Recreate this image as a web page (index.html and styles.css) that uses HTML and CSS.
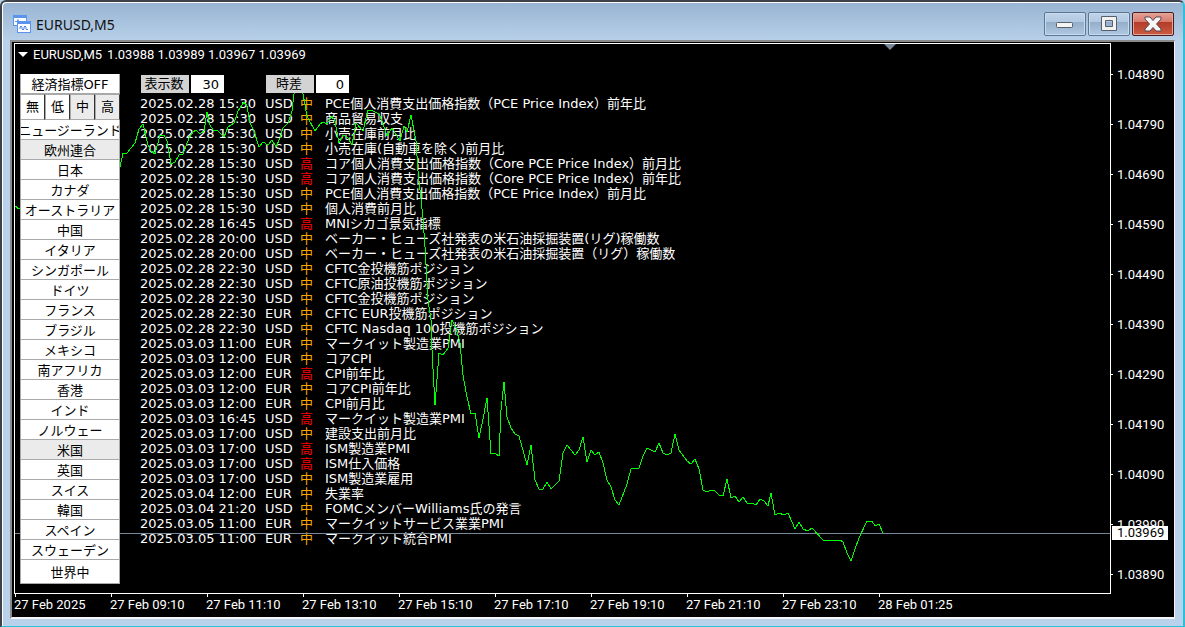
FILE: index.html
```
<!DOCTYPE html>
<html lang="ja">
<head>
    <meta charset="UTF-8">
    <meta name="viewport" content="width=device-width, initial-scale=1.0">
    <title>EURUSD,M5</title>
    <link rel="stylesheet" href="styles.css">
</head>
<body>
    <div class="window">
        <header class="titlebar">
            <svg class="app-icon" width="18" height="18" viewBox="0 0 18 18">
                <rect x="0" y="0" width="14" height="11" fill="#5b94ee"/>
                <rect x="1" y="3" width="12" height="7" fill="#fff"/>
                <path d="M2 6.500h2l1-2 1 3 2-1" fill="none" stroke="#5b94ee"/>
                <rect x="4" y="6" width="14" height="12" fill="#5b94ee"/>
                <rect x="5" y="9" width="12" height="8" fill="#fff"/>
                <path d="M7 14v-2l1-1 1 1v2l1 1 1-1v-2l1-1 1 1v2l1 1 1-1" fill="none" stroke="#4a80dd"/>
            </svg>
            <h1>EURUSD,M5</h1>
            <div class="window-buttons">
                <button class="win-btn" aria-label="最小化">
                    <svg width="18" height="16" viewBox="0 0 18 16">
                        <rect x="0.500" y="6.500" width="16" height="5" rx="1" fill="#f4f4f4" stroke="#56606c"/>
                    </svg>
                </button>
                <button class="win-btn" aria-label="最大化">
                    <svg width="18" height="16" viewBox="0 0 18 16">
                        <path d="M1.500 .5h15v14h-15zM5.500 4.500v6h7v-6z" fill="#f1f1f1" fill-rule="evenodd" stroke="#56606c"/>
                    </svg>
                </button>
                <button class="win-btn close" aria-label="閉じる">
                    <svg width="18" height="16" viewBox="0 0 18 16">
                        <path d="M1 1h5l3 3.500 3-3.500h5v2l-4.500 5 4.500 5v2h-5l-3-3.500-3 3.500h-5v-2l4.500-5-4.500-5z" fill="#f6f6f6" stroke="#5b4550"/>
                    </svg>
                </button>
            </div>
        </header>

        <main class="chart">
            <section class="plot">
                <svg class="price-line" viewBox="15 44 1095 549" preserveAspectRatio="none">
                    <path class="shift-mark" d="M884 44h12l-6 6z"/>
                    <path class="bid" d="M15 533.500H1110"/>
                    <polyline class="close-line" points="15,206 19,209 60,190 100,205 120,167 123,153 127,153 135,143 139,129 143,124 148,145 151,151 155,154 160,135 164,135 167,141 171,164 175,162 179,155 183,154 189,138 193,132 196,130 200,134 204,131 207,112 210,125 213,130 218,131 224,137 228,127 234,123 238,111 244,102 247,106 250,123 254,131 259,147 263,142 268,145 272,140 276,147 280,138 283,128 288,123 292,111 294,94 298,80 303,94 307,116 315,131 320,124 323,122 327,124 332,116 335,121 339,143 343,135 348,138 352,145 356,123 363,131 368,110 373,111 379,114 382,121 387,136 392,128 400,141 404,126 407,132 411,115 416,141 418,171 423,218 425,247 428,300 431,320 432,350 435,405 439,353 443,355 448,348 452,320 456,328 460,343 463,375 467,397 471,414 475,413 479,438 483,419 487,398 491,454 495,453 499,456 501,410 504,382 507,417 511,428 515,434 519,436 523,450 527,465 531,445 535,480 539,489 543,489 547,482 551,489 559,481 563,453 567,445 575,455 579,450 583,437 587,462 591,450 595,455 599,452 603,463 607,480 611,487 615,500 619,505 627,484 631,469 639,468 643,456 647,448 655,452 659,443 663,453 667,455 671,453 675,434 679,450 687,461 691,464 695,459 699,469 703,490 707,492 711,490 715,491 719,495 723,496 727,479 731,498 735,496 739,502 743,497 747,503 752,503 756,505 760,499 764,501 768,506 771,493 775,515 779,513 784,515 788,513 792,522 795,529 799,522 803,529 808,531 812,528 823,540 840,540 843,542 847,553 851,561 855,549 859,538 867,521 872,521 875,526 879,524 883,533"/>
                </svg>

                <div class="ohlc">
                    <span class="arrow"></span>
                    <span>EURUSD,M5</span>
                    <span>1.03988 1.03989 1.03967 1.03969</span>
                </div>

                <div class="content">
                    <div class="panel">
                        <button>経済指標OFF</button>
                        <div class="levels">
                            <button>無</button>
                            <button>低</button>
                            <button class="on">中</button>
                            <button class="on">高</button>
                        </div>
                        <button>ニュージーランド</button>
                        <button class="on">欧州連合</button>
                        <button>日本</button>
                        <button>カナダ</button>
                        <button>オーストラリア</button>
                        <button>中国</button>
                        <button>イタリア</button>
                        <button>シンガポール</button>
                        <button>ドイツ</button>
                        <button>フランス</button>
                        <button>ブラジル</button>
                        <button>メキシコ</button>
                        <button>南アフリカ</button>
                        <button>香港</button>
                        <button>インド</button>
                        <button>ノルウェー</button>
                        <button class="on">米国</button>
                        <button>英国</button>
                        <button>スイス</button>
                        <button>韓国</button>
                        <button>スペイン</button>
                        <button>スウェーデン</button>
                        <button class="world">世界中</button>
                    </div>

                    <div class="calendar">
                        <form class="fields">
                            <div class="field">
                                <label for="count">表示数</label>
                                <input id="count" type="text" value="30">
                            </div>
                            <div class="field">
                                <label for="offset">時差</label>
                                <input id="offset" type="text" value="0">
                            </div>
                        </form>
                        <table id="events">
                            <tbody></tbody>
                        </table>
                    </div>
                </div>
            </section>

            <aside class="price-axis">
                <span>1.04890</span>
                <span>1.04790</span>
                <span>1.04690</span>
                <span>1.04590</span>
                <span>1.04490</span>
                <span>1.04390</span>
                <span>1.04290</span>
                <span>1.04190</span>
                <span>1.04090</span>
                <span>1.03990</span>
                <span>1.03890</span>
                <strong class="bid-label">1.03969</strong>
            </aside>

            <footer class="time-axis">
                <span>27 Feb 2025</span>
                <span>27 Feb 09:10</span>
                <span>27 Feb 11:10</span>
                <span>27 Feb 13:10</span>
                <span>27 Feb 15:10</span>
                <span>27 Feb 17:10</span>
                <span>27 Feb 19:10</span>
                <span>27 Feb 21:10</span>
                <span>27 Feb 23:10</span>
                <span>28 Feb 01:25</span>
            </footer>
        </main>
    </div>

    <script>
        const events = [
            ['2025.02.28 15:30', 'USD', '中', 'PCE個人消費支出価格指数（PCE Price Index）前年比'],
            ['2025.02.28 15:30', 'USD', '中', '商品貿易収支'],
            ['2025.02.28 15:30', 'USD', '中', '小売在庫前月比'],
            ['2025.02.28 15:30', 'USD', '中', '小売在庫(自動車を除く)前月比'],
            ['2025.02.28 15:30', 'USD', '高', 'コア個人消費支出価格指数（Core PCE Price Index）前月比'],
            ['2025.02.28 15:30', 'USD', '高', 'コア個人消費支出価格指数（Core PCE Price Index）前年比'],
            ['2025.02.28 15:30', 'USD', '中', 'PCE個人消費支出価格指数（PCE Price Index）前月比'],
            ['2025.02.28 15:30', 'USD', '中', '個人消費前月比'],
            ['2025.02.28 16:45', 'USD', '高', 'MNIシカゴ景気指標'],
            ['2025.02.28 20:00', 'USD', '中', 'ベーカー・ヒューズ社発表の米石油採掘装置(リグ)稼働数'],
            ['2025.02.28 20:00', 'USD', '中', 'ベーカー・ヒューズ社発表の米石油採掘装置（リグ）稼働数'],
            ['2025.02.28 22:30', 'USD', '中', 'CFTC金投機筋ポジション'],
            ['2025.02.28 22:30', 'USD', '中', 'CFTC原油投機筋ポジション'],
            ['2025.02.28 22:30', 'USD', '中', 'CFTC金投機筋ポジション'],
            ['2025.02.28 22:30', 'EUR', '中', 'CFTC EUR投機筋ポジション'],
            ['2025.02.28 22:30', 'USD', '中', 'CFTC Nasdaq 100投機筋ポジション'],
            ['2025.03.03 11:00', 'EUR', '中', 'マークイット製造業PMI'],
            ['2025.03.03 12:00', 'EUR', '中', 'コアCPI'],
            ['2025.03.03 12:00', 'EUR', '高', 'CPI前年比'],
            ['2025.03.03 12:00', 'EUR', '中', 'コアCPI前年比'],
            ['2025.03.03 12:00', 'EUR', '中', 'CPI前月比'],
            ['2025.03.03 16:45', 'USD', '高', 'マークイット製造業PMI'],
            ['2025.03.03 17:00', 'USD', '中', '建設支出前月比'],
            ['2025.03.03 17:00', 'USD', '高', 'ISM製造業PMI'],
            ['2025.03.03 17:00', 'USD', '高', 'ISM仕入価格'],
            ['2025.03.03 17:00', 'USD', '中', 'ISM製造業雇用'],
            ['2025.03.04 12:00', 'EUR', '中', '失業率'],
            ['2025.03.04 21:20', 'USD', '中', 'FOMCメンバーWilliams氏の発言'],
            ['2025.03.05 11:00', 'EUR', '中', 'マークイットサービス業業PMI'],
            ['2025.03.05 11:00', 'EUR', '中', 'マークイット統合PMI']
        ];

        const tbody = document.querySelector('#events tbody');
        events.forEach(row => {
            const tr = document.createElement('tr');
            row.forEach(cell => {
                const td = document.createElement('td');
                td.textContent = cell;
                tr.appendChild(td);
            });
            tr.cells[2].className = row[2] === '高' ? 'high' : 'medium';
            tbody.appendChild(tr);
        });
    </script>
</body>
</html>
```
FILE: styles.css
```
* {
    box-sizing: border-box;
}
body {
    margin: 0;
    background-color: #b9d1ea;
    font-family: "DejaVu Sans", "Noto Sans CJK JP", sans-serif;
    font-size: 13px;
    color: #ffffff;
}
button, input {
    font: inherit;
    color: #000000;
    margin: 0;
    padding: 0;
    border: none;
    border-radius: 0;
}

/* window frame */
.window {
    display: flex;
    flex-direction: column;
    min-height: 100vh;
    padding: 0 8px 7px 8px;
    border: 2px solid #3c4248;
    border-right: 2px solid #27c3dc;
    border-bottom: 1px solid #27c3dc;
    border-radius: 6px 6px 0 0;
    box-shadow: inset 1px 1px 0 #ffffff;
    background: linear-gradient(#98b4d2, #b9d1ea 40px);
}
.titlebar {
    display: flex;
    align-items: center;
    height: 38px;
    padding: 6px 1px 0 3px;
}
.app-icon {
    margin-right: 5px;
}
h1 {
    flex: 1;
    margin: 0;
    font-family: "Noto Sans", sans-serif;
    font-size: 14px;
    font-weight: normal;
    color: #111111;
}
.window-buttons {
    display: flex;
    gap: 2px;
}
.win-btn {
    display: flex;
    align-items: center;
    justify-content: center;
    width: 42px;
    height: 24px;
    border: 1px solid #5f7690;
    border-radius: 2px;
    box-shadow: inset 0 0 0 1px #c9dbee;
    background: linear-gradient(#c0d4ea, #b0c8e1 42%, #94aeca 42%, #afc8e2);
}
.win-btn.close {
    border-color: #4d1b20;
    box-shadow: inset 0 0 0 1px #e0a79d;
    background: linear-gradient(#e6a196, #d6796a 42%, #b43c27 42%, #cb5c42);
}

/* chart area */
.chart {
    flex: 1;
    display: grid;
    grid-template-columns: 1fr 63px;
    grid-template-rows: 1fr 23px;
    padding: 1px 0 0 2px;
    border: 2px solid #8a8a8a;
    border-width: 2px 1px 2px 2px;
    border-right-color: #f5f5f5;
    border-bottom-color: #f5f5f5;
    background-color: #000000;
}
.plot {
    position: relative;
    border: 1px solid #ffffff;
}
.price-line {
    position: absolute;
    z-index: 1;
    top: 0;
    left: 0;
    width: 100%;
    height: 100%;
    pointer-events: none;
}
.shift-mark {
    fill: #778899;
}
.bid {
    stroke: #778899;
}
.close-line {
    fill: none;
    stroke: #00ff00;
    shape-rendering: crispEdges;
}
.ohlc {
    display: flex;
    align-items: center;
    gap: 5px;
    height: 20px;
    padding-left: 3px;
}
.ohlc, .price-axis, .time-axis {
    font-family: Roboto, sans-serif;
}
.arrow {
    border: 5px solid transparent;
    border-top-color: #ffffff;
    border-bottom: none;
}
.content {
    display: flex;
    align-items: flex-start;
    gap: 20px;
    padding: 10px 0 9px 5px;
}

/* country and importance filters */
.panel {
    position: relative;
    z-index: 2;
    display: flex;
    flex-direction: column;
    width: 100px;
}
.panel button {
    display: flex;
    align-items: center;
    justify-content: center;
    height: 20px;
    padding-top: 3px;
    line-height: 16px;
    background-color: #ffffff;
    border: 1px solid #a9a9a9;
    border-top: none;
    white-space: nowrap;
    overflow: hidden;
}
.panel .on {
    background-color: #ebebeb;
}
.levels {
    display: grid;
    grid-template-columns: repeat(4, 1fr);
    background-color: #a9a9a9;
}
.panel .levels button {
    height: 26px;
    padding-top: 0;
    border-top: 1px solid #a9a9a9;
    border-right-color: #333333;
}
.panel .world {
    height: 24px;
}

/* event list */
.fields {
    position: relative;
    z-index: 2;
    display: flex;
    gap: 42px;
    padding: 1px 0 0 1px;
}
.field {
    display: flex;
    gap: 2px;
    height: 18px;
}
.field label {
    width: 48px;
    padding-right: 2px;
    line-height: 18px;
    text-align: center;
    background-color: #d3d3d3;
    color: #000000;
}
.field input {
    width: 33px;
    padding-right: 5px;
    text-align: right;
    background-color: #ffffff;
}
table {
    margin-top: 3px;
    border-collapse: collapse;
}
td {
    height: 15px;
    padding: 0;
    line-height: 15px;
    white-space: nowrap;
}
td:nth-child(1) {
    width: 125px;
}
td:nth-child(2) {
    width: 35px;
}
td:nth-child(3) {
    width: 25px;
}
.medium {
    color: #ffa500;
}
.high {
    color: #ff0000;
}

/* axes */
.price-axis {
    position: relative;
    display: flex;
    flex-direction: column;
    gap: 30px;
    padding-top: 21px;
}
.price-axis span {
    display: flex;
    align-items: center;
    gap: 4px;
    height: 20px;
}
.price-axis span::before {
    content: "";
    width: 2px;
    height: 1px;
    background-color: #ffffff;
}
.bid-label {
    position: absolute;
    top: 483px;
    left: 1px;
    width: 56px;
    padding-left: 5px;
    line-height: 14px;
    font-weight: normal;
    background-color: #ffffff;
    color: #000000;
}
.time-axis {
    grid-column: 1 / 3;
    display: flex;
}
.time-axis span {
    width: 96px;
    line-height: 16px;
    white-space: nowrap;
}
.time-axis span::before {
    content: "";
    display: block;
    width: 1px;
    height: 3px;
    margin-left: 1px;
    background-color: #ffffff;
}
```
